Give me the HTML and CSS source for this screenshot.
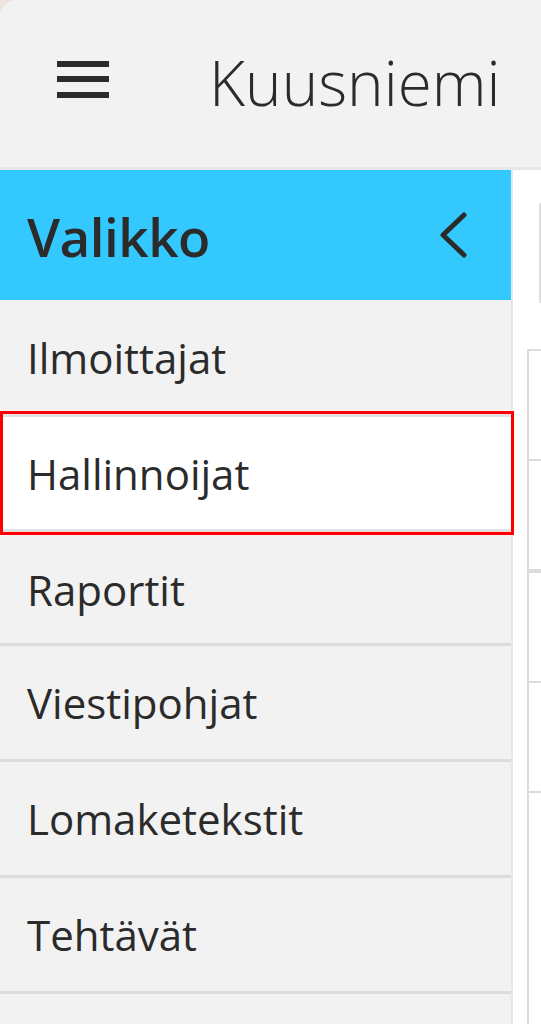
FILE: index.html
```html
<!DOCTYPE html>
<html lang="fi">
<head>
<meta charset="utf-8">
<title>Kuusniemi</title>
<link rel="stylesheet" href="styles.css">
</head>
<body>
<div class="app">
  <header class="topbar">
    <button class="burger" aria-label="Valikko">
      <svg width="52" height="40" viewBox="0 0 52 40"><rect x="0" y="0" width="52" height="6" fill="#2b2b2b"/><rect x="0" y="15" width="52" height="6" fill="#2b2b2b"/><rect x="0" y="31" width="52" height="6" fill="#2b2b2b"/></svg>
    </button>
    <h1 class="title">Kuusniemi</h1>
  </header>
  <div class="main">
    <nav class="sidebar">
      <div class="side-head">
        <span class="side-title">Valikko</span>
        <svg class="chev" width="30" height="46" viewBox="0 0 30 46"><polyline points="26,3 5,23 26,43" fill="none" stroke="#2b2b2b" stroke-width="5" stroke-linecap="round" stroke-linejoin="round"/></svg>
      </div>
      <a class="item first">Ilmoittajat</a>
      <a class="item active">Hallinnoijat</a>
      <a class="item after">Raportit</a>
      <a class="item">Viestipohjat</a>
      <a class="item">Lomaketekstit</a>
      <a class="item">Tehtävät</a>
      <a class="item"></a>
    </nav>
    <section class="content">
      <div class="field"></div>
      <div class="table">
        <div class="row"></div>
        <div class="row thick"></div>
        <div class="row"></div>
        <div class="row"></div>
        <div class="rest"></div>
      </div>
    </section>
  </div>
</div>
</body>
</html>
```
FILE: styles.css
```css
html {
  background: #eee3e1;
}
body {
  margin: 0;
  font-family: "Open Sans", "Noto Sans", sans-serif;
  color: #2b2b2b;
  height: 1024px;
  overflow: hidden;
}
.app {
  background: #ffffff;
  border-top-left-radius: 18px;
  overflow: hidden;
  height: 1024px;
}
.topbar {
  height: 167px;
  background: #f2f2f2;
  border-bottom: 3px solid #e7e7e7;
  display: flex;
  align-items: center;
}
.burger {
  border: 0;
  background: none;
  padding: 0;
  margin: 0 0 0 57px;
  display: flex;
  width: 52px;
  height: 40px;
  position: relative;
  top: -3px;
  flex: none;
}
.title {
  margin: 0 0 0 100px;
  font-size: 62px;
  font-weight: 350;
  line-height: 1;
  position: relative;
  top: -2px;
  white-space: nowrap;
}
.main {
  display: flex;
  height: 854px;
}
.sidebar {
  width: 511px;
  flex: none;
  background: #f2f2f2;
  border-right: 2px solid #e4e7eb;
  display: flex;
  flex-direction: column;
}
.side-head {
  flex: none;
  height: 130px;
  background: #33c9ff;
  display: flex;
  align-items: center;
  justify-content: space-between;
  padding: 0 43px 0 27px;
}
.side-title {
  font-size: 53px;
  font-weight: 650;
  letter-spacing: -0.5px;
  position: relative;
  top: 1px;
}
.chev {
  display: block;
}
.item {
  display: flex;
  align-items: center;
  height: 113px;
  padding-left: 27px;
  font-size: 42px;
  border-bottom: 3px solid #dcdcdc;
  flex: none;
  color: #2b2b2b;
}
.item.first {
  height: 111px;
  border-bottom: 0;
  padding-top: 4px;
  box-sizing: border-box;
}
.item.active {
  height: 118px;
  background: #ffffff;
  border: 3px solid #ff0000;
  box-shadow: inset 0 3px 0 #e2e2e2, inset 0 -3px 0 #e2e2e2;
  margin: 0 -3px 0 0;
  padding-left: 24px;
  position: relative;
  z-index: 1;
}
.item.after {
  height: 108px;
}
.content {
  flex: 1;
  overflow: hidden;
  padding: 33px 0 0 14px;
}
.field {
  height: 96px;
  margin-left: 12px;
  border: 2px solid #dedede;
  border-right: 0;
  background: #fff;
}
.table {
  margin-top: 46px;
  border-left: 2px solid #dcdcdc;
  border-top: 2px solid #dcdcdc;
}
.row {
  height: 108px;
  border-bottom: 2px solid #dcdcdc;
}
.row.thick {
  border-bottom-width: 4px;
}
.rest {
  height: 300px;
}
```
